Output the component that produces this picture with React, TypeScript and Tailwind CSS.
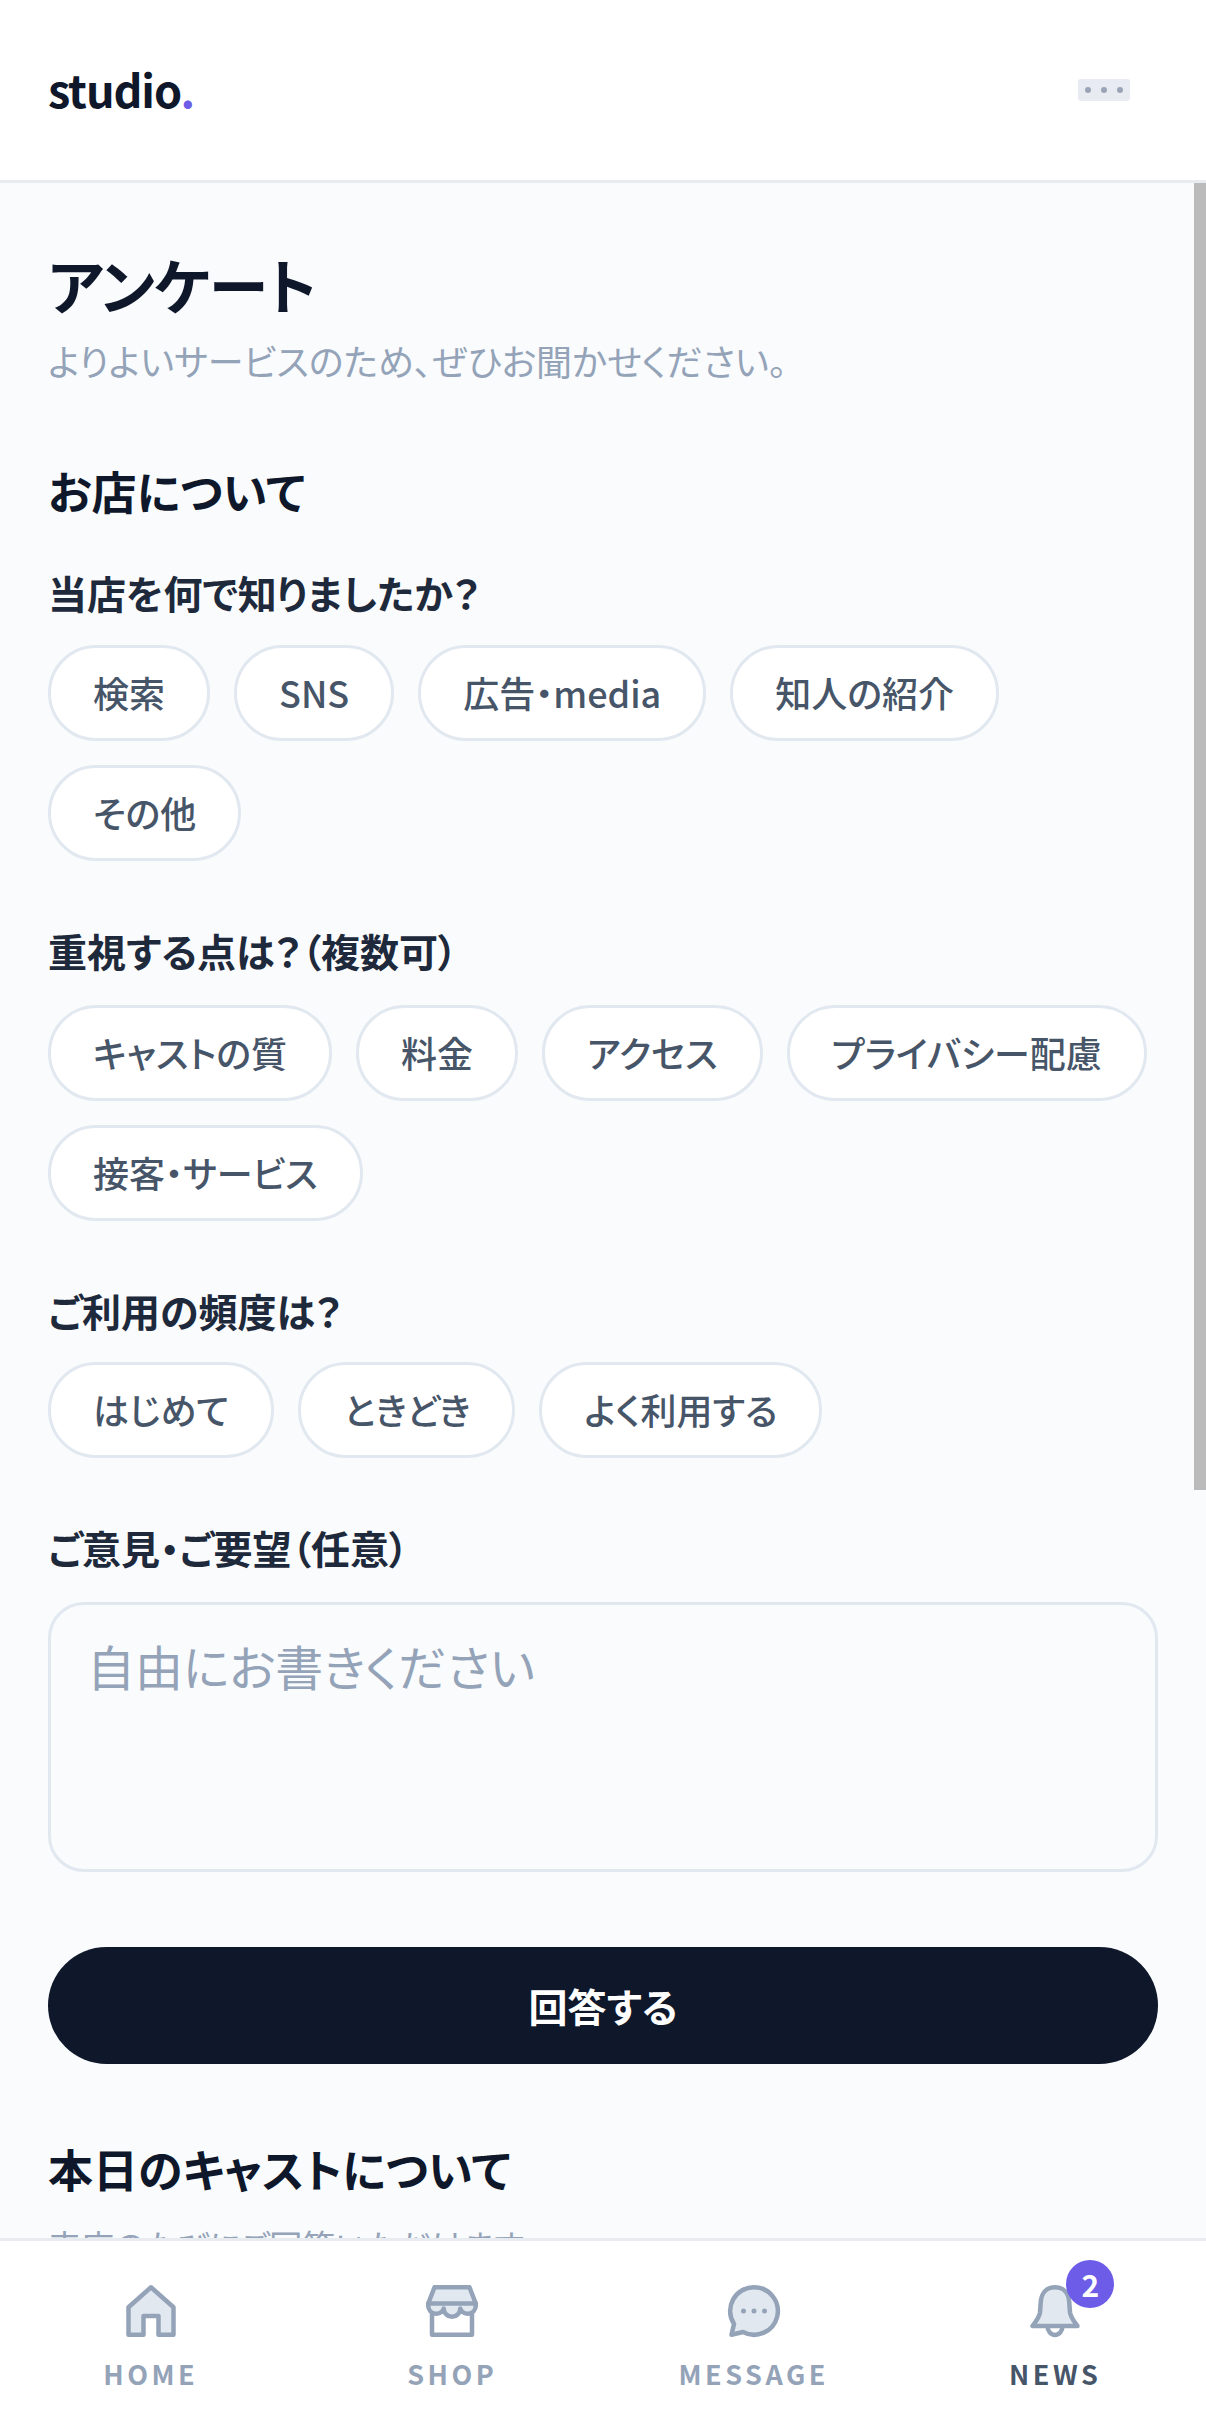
import React from "react";

const Chip = ({ label }: { label: string }) => (
  <div className="flex h-[96px] items-center rounded-full border-[3px] border-[#e2e8f0] bg-white px-[42px] pb-[2px] text-[36px] leading-none font-medium text-[#475569]">
    {label}
  </div>
);

const Question = ({ title, chips, className, gap }: { title: string; chips: string[]; className: string; gap: string }) => (
  <section className={className}>
    <h3 className="text-[39px] leading-[54px] font-bold text-[#1e293b]">{title}</h3>
    <div className={`${gap} flex flex-wrap gap-x-[24px] gap-y-[24px]`}>
      {chips.map((c) => (
        <Chip key={c} label={c} />
      ))}
    </div>
  </section>
);

const iconProps = {
  width: 60,
  height: 60,
  viewBox: "0 0 24 24",
  fill: "#e2e8f0",
  stroke: "#94a3b8",
  strokeWidth: 1.8,
  strokeLinejoin: "round" as const,
  strokeLinecap: "round" as const,
};

const HomeIcon = () => (
  <svg {...iconProps}>
    <path d="M12 2.5 L21 10.5 V21.5 H15 V14 H9 V21.5 H3 V10.5 Z" />
  </svg>
);

const ShopIcon = () => (
  <svg {...iconProps}>
    <path fill="#ffffff" d="M4 11 V21.5 H20 V11" />
    <path d="M5 2.5 H19 L21.5 9 V10 A3.2 3.2 0 0 1 15.3 11 A3.3 3.3 0 0 1 8.7 11 A3.2 3.2 0 0 1 2.5 10 V9 Z" />
    <path fill="none" d="M2.5 9 H21.5" />
  </svg>
);

const MessageIcon = () => (
  <svg {...iconProps}>
    <path d="M12 2.5 A9.5 9.5 0 1 1 7.6 20.4 L3 21.5 L4 17.2 A9.5 9.5 0 0 1 12 2.5 Z" />
    <circle cx="7.8" cy="12" r="1" fill="#94a3b8" stroke="none" />
    <circle cx="12" cy="12" r="1" fill="#94a3b8" stroke="none" />
    <circle cx="16.2" cy="12" r="1" fill="#94a3b8" stroke="none" />
  </svg>
);

const BellIcon = () => (
  <svg {...iconProps}>
    <path fill="none" d="M9 18 A3 3.6 0 0 0 15 18" />
    <path d="M12 2.5 C8.5 2.5 6.5 5 6.3 8.5 L6 12.5 C5.8 14.5 4.5 16 3 18 H21 C19.5 16 18.2 14.5 18 12.5 L17.7 8.5 C17.5 5 15.5 2.5 12 2.5 Z" />
  </svg>
);

const NavItem = ({ label, icon, active, badge }: { label: string; icon: React.ReactNode; active?: boolean; badge?: string }) => (
  <div className="flex flex-col items-center">
    <div className="relative h-[60px] w-[60px]">
      {icon}
      {badge && (
        <span className="absolute top-[-21px] left-[41px] flex h-[48px] w-[48px] items-center justify-center rounded-full bg-[#6c5ce7] text-[30px] leading-none font-bold text-white">
          {badge}
        </span>
      )}
    </div>
    <span
      className={`mt-[15px] text-[27px] leading-[36px] font-bold tracking-[0.13em] ${active ? "text-[#475569]" : "text-[#94a3b8]"}`}
    >
      {label}
    </span>
  </div>
);

export default function App() {
  return (
    <div className="relative flex h-[2432px] w-[1206px] flex-col overflow-hidden bg-[#f9fbfd] font-['Noto_Sans_CJK_JP','Noto_Sans',sans-serif] [font-feature-settings:'palt']">
      <header className="flex h-[183px] shrink-0 items-center justify-between border-b-[3px] border-[#e8ebf0] bg-white pr-[76px] pl-[48px]">
        <div className="pb-[3px] text-[45px] leading-none font-bold tracking-[-0.025em] text-[#0f172a]">
          studio<span className="text-[#6c5ce7]">.</span>
        </div>
        <div className="flex h-[22px] w-[52px] items-center justify-center gap-[10px] rounded-[3px] bg-[#e8ebf1]">
          <span className="h-[6px] w-[6px] rounded-full bg-[#9ca3b8]" />
          <span className="h-[6px] w-[6px] rounded-full bg-[#9ca3b8]" />
          <span className="h-[6px] w-[6px] rounded-full bg-[#9ca3b8]" />
        </div>
      </header>

      <main className="relative min-h-0 flex-1 overflow-hidden px-[48px] pt-[65px]">
        <div className="absolute top-0 right-0 h-[1307px] w-[12px] bg-[#bbbbbb]" />
        <h1 className="text-[60px] leading-[72px] font-bold tracking-[-0.02em] text-[#0f172a]">アンケート</h1>
        <p className="mt-[13px] text-[36px] leading-[54px] text-[#94a3b8]">よりよいサービスのため、ぜひお聞かせください。</p>
        <h2 className="mt-[74px] text-[45px] leading-[60px] font-bold text-[#0f172a]">お店について</h2>

        <Question className="mt-[44px]" gap="mt-[26px]" title="当店を何で知りましたか？" chips={["検索", "SNS", "広告・media", "知人の紹介", "その他"]} />
        <Question className="mt-[62px]" gap="mt-[28px]" title="重視する点は？（複数可）" chips={["キャストの質", "料金", "アクセス", "プライバシー配慮", "接客・サービス"]} />
        <Question className="mt-[62px]" gap="mt-[25px]" title="ご利用の頻度は？" chips={["はじめて", "ときどき", "よく利用する"]} />

        <section className="mt-[62px]">
          <h3 className="text-[39px] leading-[54px] font-bold text-[#1e293b]">ご意見・ご要望（任意）</h3>
          <div className="mt-[28px] h-[270px] rounded-[36px] border-[3px] border-[#e2e8f0] px-[36px] pt-[27px] text-[48px] leading-[66px] text-[#94a3b8]">
            自由にお書きください
          </div>
        </section>

        <button className="mt-[75px] flex h-[117px] w-full items-center justify-center rounded-full bg-[#0f172a] text-[39px] font-bold text-white">
          回答する
        </button>

        <h2 className="mt-[75px] text-[45px] leading-[60px] font-bold text-[#0f172a]">本日のキャストについて</h2>
        <p className="mt-[22px] text-[33px] leading-[48px] text-[#94a3b8]">来店のたびにご回答いただけます</p>
      </main>

      <nav className="grid h-[194px] shrink-0 grid-cols-4 border-t-[3px] border-[#e8ebf0] bg-white pt-[40px]">
        <NavItem label="HOME" icon={<HomeIcon />} />
        <NavItem label="SHOP" icon={<ShopIcon />} />
        <NavItem label="MESSAGE" icon={<MessageIcon />} />
        <NavItem label="NEWS" icon={<BellIcon />} active badge="2" />
      </nav>
    </div>
  );
}
